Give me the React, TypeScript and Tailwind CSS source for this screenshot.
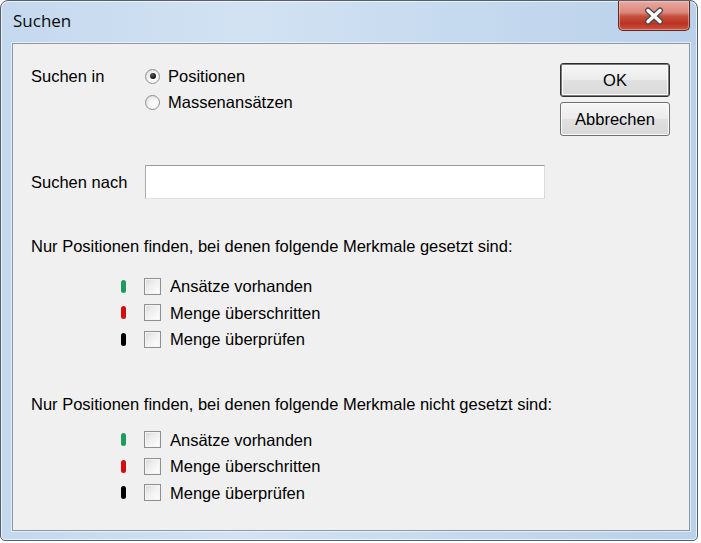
import React from "react";

function Radio({ checked }: { checked?: boolean }) {
  return (
    <span className="relative flex h-[15px] w-[15px] shrink-0 items-center justify-center rounded-full border border-[#8e8f8f] bg-[radial-gradient(circle_at_65%_65%,#ffffff_0%,#f4f4f4_45%,#d4d4d4_100%)]">
      {checked && (
        <span className="h-[6px] w-[6px] rounded-full bg-[radial-gradient(circle_at_40%_35%,#5a5a5a,#0f0f0f_70%)]" />
      )}
    </span>
  );
}

function Check() {
  return (
    <span className="h-[17px] w-[17px] shrink-0 border border-[#8e8f8f] bg-[linear-gradient(135deg,#d6d6d6_0%,#eeeeee_40%,#ffffff_100%)] shadow-[inset_0_0_0_1px_#f4f4f4]" />
  );
}

function Row({ color, label }: { color: string; label: string }) {
  return (
    <div className="flex h-[26.5px] items-center pl-[90px]">
      <span className={`h-[13px] w-[5px] shrink-0 rounded-full ${color}`} />
      <span className="ml-[18px] flex">
        <Check />
      </span>
      <span className="ml-[9px] leading-[20px]">{label}</span>
    </div>
  );
}

export default function App() {
  return (
    <div className="h-[543px] w-[701px] bg-white font-['Liberation_Sans',Arial,sans-serif] text-[16.5px] text-black">
      <div className="flex h-[541px] w-[698px] flex-col rounded-t-[8px] rounded-b-[5px] border border-[#565f6b] bg-[linear-gradient(to_right,#c4d8ee_0%,#d2e2f3_35%,#c6daef_65%,#bad1ea_100%)] shadow-[inset_0_0_0_1px_rgba(255,255,255,0.65)]">
        {/* title bar */}
        <div className="flex h-[42px] shrink-0 items-start justify-between pl-[12px] pr-[7px]">
          <span className="mt-[8px] font-['Open_Sans',sans-serif] text-[17px] leading-[24px] text-[#0b0b0b]">
            Suchen
          </span>
          <div className="flex h-[30px] w-[72px] items-center justify-center rounded-b-[5px] border border-t-0 border-[#5e2720] bg-[linear-gradient(to_bottom,#e9aaa0_0%,#db877b_40%,#c6503f_52%,#bb3322_78%,#cf5440_100%)] shadow-[inset_0_0_0_1px_rgba(255,220,210,0.45)]">
            <svg width="22" height="18" viewBox="0 0 22 18">
              <path d="M5 3.5 L17 14.5 M17 3.5 L5 14.5" stroke="#4c4c4c" strokeWidth="6" strokeLinecap="round" fill="none" />
              <path d="M5 3.5 L17 14.5 M17 3.5 L5 14.5" stroke="#ffffff" strokeWidth="3.4" strokeLinecap="round" fill="none" />
            </svg>
          </div>
        </div>
        {/* client */}
        <div className="mb-[9px] ml-[11px] mr-[7px] flex flex-1 border border-[#8b98a8] bg-[#f0f0f0] pl-[18px] pr-[19px] shadow-[0_0_0_1px_rgba(255,255,255,0.55)]">
          <div className="flex flex-1 flex-col pt-[19px]">
            <div className="grid grid-cols-[114px_1fr]">
              <div className="flex h-[26px] items-center">Suchen in</div>
              <div className="flex h-[26px] items-center">
                <Radio checked />
                <span className="ml-[8px]">Positionen</span>
              </div>
              <div />
              <div className="flex h-[26px] items-center">
                <Radio />
                <span className="ml-[8px]">Massenansätzen</span>
              </div>
            </div>
            <div className="mt-[50px] flex h-[34px] items-center">
              <span className="w-[114px]">Suchen nach</span>
              <div className="h-[34px] w-[400px] border border-t-[#9c9c9c] border-l-[#ababab] border-r-[#dadada] border-b-[#e3e3e3] bg-white" />
            </div>
            <div className="mt-[37px] h-[20px] leading-[20px]">
              Nur Positionen finden, bei denen folgende Merkmale gesetzt sind:
            </div>
            <div className="mt-[17px] flex flex-col">
              <Row color="bg-[#1e9b5c]" label="Ansätze vorhanden" />
              <Row color="bg-[#d40d0d]" label="Menge überschritten" />
              <Row color="bg-[#000000]" label="Menge überprüfen" />
            </div>
            <div className="mt-[41px] h-[20px] leading-[20px]">
              Nur Positionen finden, bei denen folgende Merkmale nicht gesetzt sind:
            </div>
            <div className="mt-[13px] flex flex-col">
              <Row color="bg-[#1e9b5c]" label="Ansätze vorhanden" />
              <Row color="bg-[#d40d0d]" label="Menge überschritten" />
              <Row color="bg-[#000000]" label="Menge überprüfen" />
            </div>
          </div>
          <div className="flex w-[110px] shrink-0 flex-col gap-[5px] pt-[19px]">
            <button className="flex h-[34px] items-center justify-center rounded-[3px] border border-[#2e2e2e] bg-[linear-gradient(to_bottom,#f6f6f6_0%,#ececec_48%,#e0e0e0_52%,#d9d9d9_100%)] shadow-[inset_0_0_0_1px_#7a7a7a,inset_0_0_0_2px_#fafafa]">
              OK
            </button>
            <button className="flex h-[34px] items-center justify-center rounded-[3px] border border-[#707070] bg-[linear-gradient(to_bottom,#f6f6f6_0%,#ececec_48%,#e0e0e0_52%,#d9d9d9_100%)] shadow-[inset_0_0_0_1px_#fbfbfb]">
              Abbrechen
            </button>
          </div>
        </div>
      </div>
    </div>
  );
}
